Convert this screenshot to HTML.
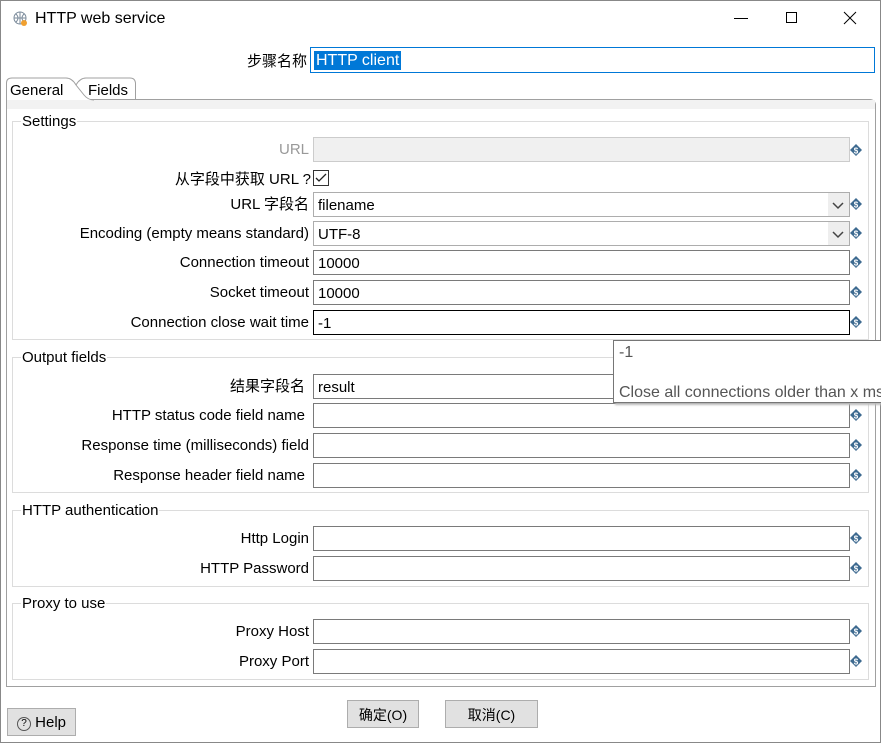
<!DOCTYPE html><html><head><meta charset="utf-8"><style>
*{box-sizing:border-box}body{margin:0;width:881px;height:743px;position:relative;background:#fff;font-family:"Liberation Sans","Noto Sans CJK SC",sans-serif;font-size:15px;color:#000;overflow:hidden}
.a{position:absolute}
.win{left:0;top:0;width:881px;height:743px;border:1px solid #888;}
.lbl{position:absolute;right:572px;text-align:right;white-space:nowrap;line-height:20px;margin-top:2px}
.f{position:absolute;left:313px;width:537px;height:25px;border:1px solid #7a7a7a;background:#fff;padding:4px 4px 2px;line-height:17px}
.grp{position:absolute;left:12px;width:857px;border:1px solid #dcdcdc}
.gt{position:absolute;left:8px;top:-10px;background:#fff;padding:0 1px;line-height:20px}
.btn{position:absolute;background:#e1e1e1;border:1px solid #adadad;text-align:center;line-height:28px;font-size:14px}
</style></head><body>
<div class="a win"></div>
<svg class="a" style="left:13px;top:11px" width="16" height="16"><circle cx="7" cy="7" r="6" fill="none" stroke="#7a8a9a"/><path d="M1 7h12M7 1v12M3 3q4 4 0 8M11 3q-4 4 0 8" stroke="#7a8a9a" fill="none"/><circle cx="11" cy="12" r="3" fill="#f0a030"/></svg>
<div class="a" style="left:35px;top:10px;font-size:16px">HTTP web service</div>
<div class="a" style="left:734px;top:18px;width:14px;height:1px;background:#000"></div>
<div class="a" style="left:786px;top:12px;width:11px;height:11px;border:1px solid #000"></div>
<svg class="a" style="left:843px;top:11px" width="14" height="14"><path d="M1 1L13 13M13 1L1 13" stroke="#000"/></svg>
<div class="a" style="left:247px;top:50px">步骤名称</div>
<div class="a" style="left:310px;top:47px;width:565px;height:26px;border:1px solid #0078d7;padding:3px 3px"><span style="background:#0078d7;color:#fff;padding:1px 2px;line-height:20px;font-size:16px">HTTP client</span></div>
<div class="a" style="left:6px;top:99px;width:870px;height:588px;border:1px solid #a0a0a0;border-radius:0 6px 0 0"></div>
<div class="a" style="left:7px;top:100px;width:868px;height:9px;background:#f2f2f2"></div>
<svg class="a" style="left:6px;top:77px" width="130" height="24"><path d="M0.5 23V6Q0.5 1 6 1H60Q66 1 70 8L78 18Q82 23 88 23" fill="#fff" stroke="#a0a0a0"/><path d="M70 8Q74 1 80 1H124Q129 1 129.5 6V23" fill="none" stroke="#a0a0a0"/></svg>
<div class="a" style="left:10px;top:82px">General</div>
<div class="a" style="left:88px;top:82px">Fields</div>

<div class="grp" style="top:121px;height:219px"><div class="gt">Settings</div></div>
<div class="grp" style="top:357px;height:136px"><div class="gt">Output fields</div></div>
<div class="grp" style="top:510px;height:77px"><div class="gt">HTTP authentication</div></div>
<div class="grp" style="top:603px;height:77px"><div class="gt">Proxy to use</div></div>

<div class="lbl" style="top:138px;color:#999">URL</div><div class="f" style="top:137px;background:#f0f0f0;border-color:#ccc"></div>
<div class="lbl" style="top:168px;right:570px">从字段中获取 URL ?</div>
<svg class="a" style="left:313px;top:170px" width="16" height="16"><rect x=".5" y=".5" width="15" height="15" fill="#fff" stroke="#333"/><path d="M3 8l3 3 7-7" stroke="#222" fill="none" stroke-width="1.3"/></svg>
<div class="lbl" style="top:193px">URL 字段名</div><div class="f" style="top:192px;border-color:#adadad">filename</div>
<div class="lbl" style="top:222px">Encoding (empty means standard)</div><div class="f" style="top:221px;border-color:#adadad">UTF-8</div>
<div class="a" style="left:828px;top:193px;width:21px;height:23px;background:#eee"></div><div class="a" style="left:828px;top:222px;width:21px;height:23px;background:#eee"></div>
<svg class="a" style="left:832px;top:199px" width="12" height="40"><path d="M1 4l5 5 5-5M1 33l5 5 5-5" stroke="#444" fill="none" stroke-width="1.5"/></svg>
<div class="lbl" style="top:251px">Connection timeout</div><div class="f" style="top:250px">10000</div>
<div class="lbl" style="top:281px">Socket timeout</div><div class="f" style="top:280px">10000</div>
<div class="lbl" style="top:311px">Connection close wait time</div><div class="f" style="top:310px;border-color:#000">-1</div>
<div class="lbl" style="top:375px;right:576px">结果字段名</div><div class="f" style="top:374px">result</div>
<div class="lbl" style="top:404px;right:576px">HTTP status code field name</div><div class="f" style="top:403px"></div>
<div class="lbl" style="top:434px">Response time (milliseconds) field</div><div class="f" style="top:433px"></div>
<div class="lbl" style="top:464px;right:576px">Response header field name</div><div class="f" style="top:463px"></div>
<div class="lbl" style="top:527px">Http Login</div><div class="f" style="top:526px"></div>
<div class="lbl" style="top:557px">HTTP Password</div><div class="f" style="top:556px"></div>
<div class="lbl" style="top:620px">Proxy Host</div><div class="f" style="top:619px"></div>
<div class="lbl" style="top:650px">Proxy Port</div><div class="f" style="top:649px"></div>

<svg class="a" style="left:850px;top:0" width="14" height="680">
<defs><g id="d"><path d="M6 0L12 6L6 12L0 6Z" fill="#3d6a90"/><text x="6" y="9.5" font-size="8" fill="#fff" text-anchor="middle" font-family="Liberation Sans" font-weight="bold">$</text></g></defs>
<use href="#d" y="144"/><use href="#d" y="198"/><use href="#d" y="227"/><use href="#d" y="256"/><use href="#d" y="286"/><use href="#d" y="316"/><use href="#d" y="409"/><use href="#d" y="439"/><use href="#d" y="469"/><use href="#d" y="532"/><use href="#d" y="562"/><use href="#d" y="625"/><use href="#d" y="655"/></svg>

<div class="a" style="left:613px;top:340px;width:275px;height:63px;border:1px solid #767676;background:#fff;box-shadow:2px 2px 2px #bbb;color:#555;padding:2px 5px;line-height:20px;font-size:16px;white-space:nowrap">-1<br><br>Close all connections older than x ms</div>

<div class="btn" style="left:7px;top:708px;width:69px;height:28px;font-size:15px"><span style="display:inline-block;width:14px;height:14px;border:1px solid #555;border-radius:50%;font-size:10px;line-height:12px;vertical-align:1px">?</span> Help</div>
<div class="btn" style="left:347px;top:700px;width:72px;height:28px">确定(O)</div>
<div class="btn" style="left:445px;top:700px;width:93px;height:28px">取消(C)</div>
</body></html>
